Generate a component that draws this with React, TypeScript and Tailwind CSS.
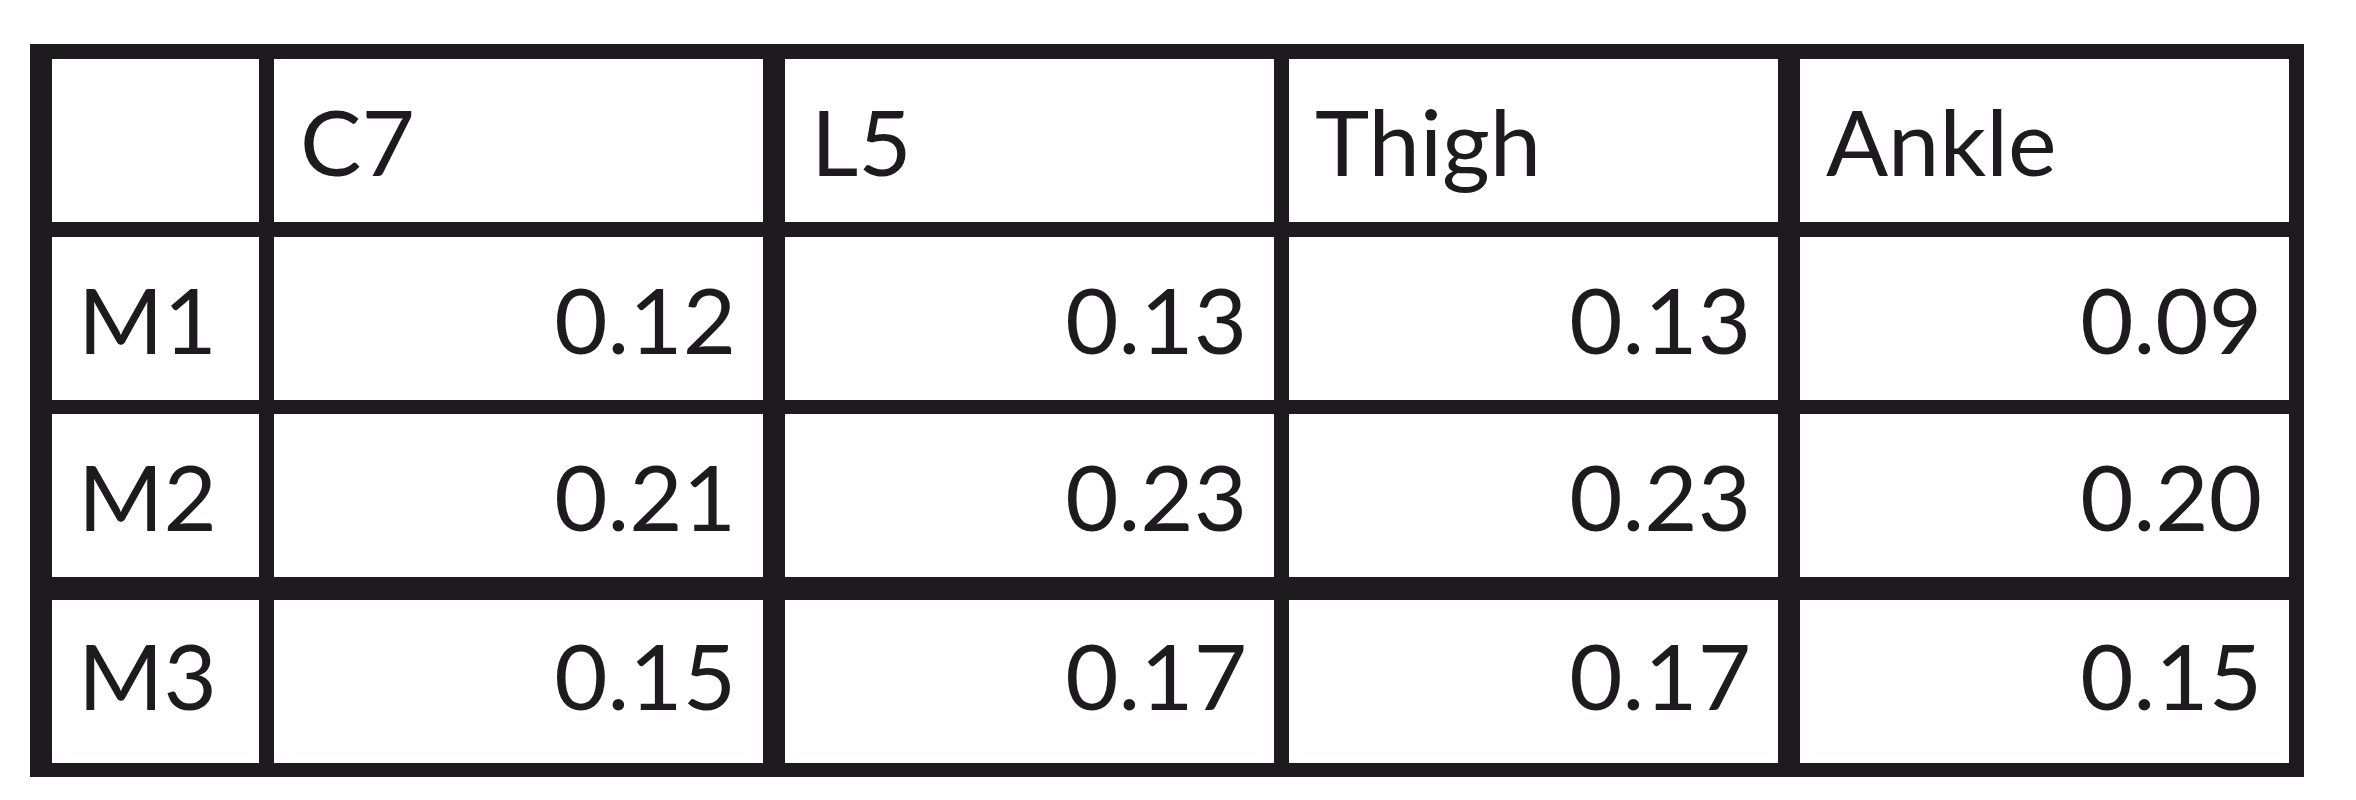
const headers = ["", "C7", "L5", "Thigh", "Ankle"];

const rows = [
  { label: "M1", values: ["0.12", "0.13", "0.13", "0.09"] },
  { label: "M2", values: ["0.21", "0.23", "0.23", "0.20"] },
  { label: "M3", values: ["0.15", "0.17", "0.17", "0.15"] },
];

// divider widths in the source image are uneven (scaled up), so each column/row carries its own offset
const colGap = ["", "ml-[15px]", "ml-[22px]", "ml-[15px]", "ml-[22px]"];
const colWidth = ["w-[207px]", "w-[489px]", "w-[489px]", "w-[489px]", "w-[489px]"];
const rowGap = ["", "mt-[15px]", "mt-[14px]", "mt-[23px]"];
const rowPad = ["pt-[36px]", "pt-[36px]", "pt-[36px]", "pt-[29px]"];

function Cell({
  col,
  pad,
  align,
  children,
}: {
  col: number;
  pad: string;
  align: "left" | "right";
  children?: React.ReactNode;
}) {
  return (
    <div
      className={`${colWidth[col]} ${colGap[col]} h-[163px] shrink-0 bg-white ${pad} ${
        align === "right" ? "pr-[27px] text-right" : "pl-[26px] text-left"
      } text-[92px] leading-none`}
    >
      {children}
    </div>
  );
}

export default function App() {
  return (
    <div className="min-h-[800px] w-[2356px] bg-white pl-[30px] pt-[44px] font-['Lato','Open_Sans',sans-serif] text-[#1d1b1e]">
      <div className="inline-flex flex-col bg-[#1d1b1e] pb-[14px] pl-[22px] pr-[15px] pt-[15px]">
        <div className="flex">
          {headers.map((h, i) => (
            <Cell key={i} col={i} pad={rowPad[0]} align="left">
              {h}
            </Cell>
          ))}
        </div>
        {rows.map((row, r) => (
          <div key={row.label} className={`flex ${rowGap[r + 1]}`}>
            <Cell col={0} pad={rowPad[r + 1]} align="left">
              {row.label}
            </Cell>
            {row.values.map((v, i) => (
              <Cell key={i} col={i + 1} pad={rowPad[r + 1]} align="right">
                {v}
              </Cell>
            ))}
          </div>
        ))}
      </div>
    </div>
  );
}
